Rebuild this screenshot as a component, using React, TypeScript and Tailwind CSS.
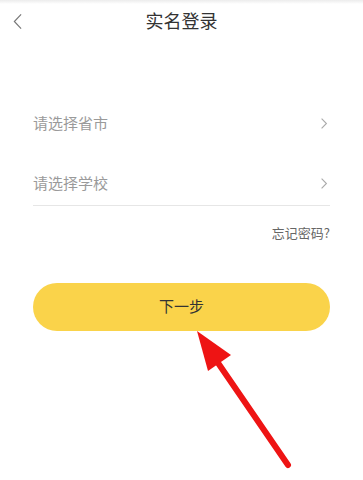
import React from "react";

const font = { fontFamily: '"Noto Sans CJK SC", "Noto Sans", sans-serif' };

function Chevron({ className }: { className?: string }) {
  return (
    <svg viewBox="0 0 10 16" className={className} fill="none" stroke="currentColor" strokeWidth="1.4">
      <path d="M2 2l6 6-6 6" />
    </svg>
  );
}

export default function App() {
  return (
    <div className="w-[363px] h-[480px] bg-white flex flex-col relative overflow-hidden" style={font}>
      <div className="h-[4px] bg-gradient-to-b from-[#ececec] to-white" />
      {/* Header */}
      <div className="h-[34px] flex items-center relative">
        <svg viewBox="0 0 10 18" className="absolute left-[13px] top-[9px] w-[9px] h-[17px] text-[#777]" fill="none" stroke="currentColor" strokeWidth="1.3">
          <path d="M9 1L1.5 9 9 17" />
        </svg>
        <div className="flex-1 text-center text-[18px] text-[#333] leading-none -mt-[3px]">实名登录</div>
      </div>

      <div className="px-[33px] flex flex-col">
        <div className="mt-[70px] h-[30px] flex items-center justify-between">
          <span className="text-[15px] text-[#9a9a9a]">请选择省市</span>
          <Chevron className="w-[8px] h-[13px] text-[#aaa] mr-[2px]" />
        </div>
        <div className="mt-[30px] h-[30px] flex items-center justify-between">
          <span className="text-[15px] text-[#9a9a9a]">请选择学校</span>
          <Chevron className="w-[8px] h-[13px] text-[#aaa] mr-[2px]" />
        </div>
        <div className="mt-[7px] h-px bg-[#e6e6e6]" />
        <div className="mt-[17px] flex justify-end">
          <span className="text-[13px] text-[#666]">忘记密码?</span>
        </div>
        <button className="mt-[40px] h-[48px] rounded-full bg-[#fad34a] flex items-center justify-center text-[15px] text-[#333]">
          下一步
        </button>
      </div>

      <svg className="absolute left-0 top-0 w-[363px] h-[480px] pointer-events-none" viewBox="0 0 363 480">
        <line x1="216" y1="360" x2="288" y2="465" stroke="#ee1414" strokeWidth="6" strokeLinecap="round" />
        <polygon points="197,331 231,355 208,371" fill="#ee1414" />
      </svg>
    </div>
  );
}
